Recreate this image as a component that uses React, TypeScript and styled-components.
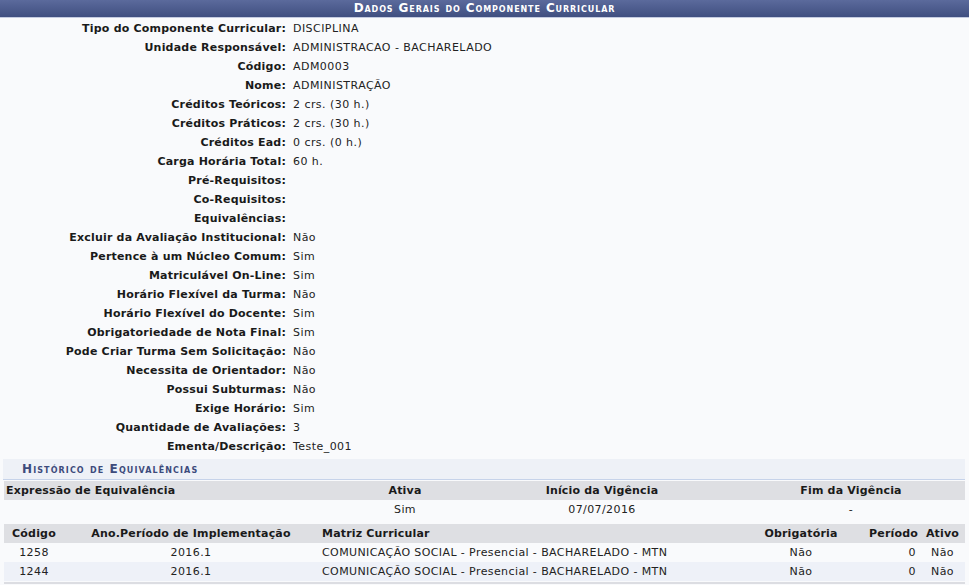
import React from "react";
import styled, { createGlobalStyle } from "styled-components";

const Global = createGlobalStyle`
  html, body { margin: 0; padding: 0; background: #ffffff; }
  body { font-family: "DejaVu Sans", Verdana, sans-serif; font-size: 11px; color: #222; }
`;

const Panel = styled.div`
  width: 969px;
  background: #f9fafc;
`;

const Caption = styled.div`
  height: 17px;
  line-height: 17px;
  background: linear-gradient(#5b6a9c, #404f80);
  color: #ffffff;
  font-weight: bold;
  font-variant: small-caps;
  font-size: 12px;
  text-align: center;
  letter-spacing: 0.9px;
  border-bottom: 1px solid #c4cbe0;
`;

const FormTable = styled.table`
  margin-top: 1px;
  width: 100%;
  border-collapse: collapse;
  table-layout: fixed;
`;

const Label = styled.th`
  width: 286px;
  height: 19px;
  padding: 0 4px 0 0;
  text-align: right;
  font-weight: bold;
  color: #1a1a1a;
  letter-spacing: 0.2px;
  white-space: nowrap;
`;

const Value = styled.td`
  padding: 0 0 0 3px;
  color: #222;
  letter-spacing: 0.45px;
  white-space: nowrap;
`;

const SubSection = styled.div`
  margin: 3px 4px 0 3px;
  height: 20px;
  line-height: 20px;
  padding-left: 19px;
  background: #eef1f7;
  border-bottom: 1px solid #c6d3ea;
  color: #3d4b7c;
  font-weight: bold;
  font-variant: small-caps;
  font-size: 12px;
  letter-spacing: 1.1px;
`;

const ListTable = styled.table<{ $gap?: number }>`
  margin: ${(p) => p.$gap ?? 0}px 4px 0 4px;
  width: 961px;
  border-collapse: collapse;
  table-layout: fixed;
`;

const Head = styled.th<{ $align?: string; $left?: number; $right?: number }>`
  background: #dedfe3;
  height: 19px;
  padding: 0 ${(p) => p.$right ?? 2}px 0 ${(p) => p.$left ?? 2}px;
  font-weight: bold;
  color: #1a1a1a;
  letter-spacing: 0.18px;
  text-align: ${(p) => p.$align ?? "left"};
  white-space: nowrap;
`;

const Row = styled.tr<{ $alt?: boolean }>`
  background: ${(p) => (p.$alt ? "#eef1f8" : "#f9fafc")};
`;

const Cell = styled.td<{ $align?: string; $right?: number }>`
  height: 19px;
  padding: 0 ${(p) => p.$right ?? 4}px 0 4px;
  text-align: ${(p) => p.$align ?? "left"};
  white-space: nowrap;
  letter-spacing: 0.4px;
  color: #222;
`;

const BottomLine = styled.div`
  margin: 1px 4px 0 4px;
  height: 2px;
  background: #dcdde2;
`;

const Tail = styled.div`
  height: 2px;
`;

const fields: [string, string][] = [
  ["Tipo do Componente Curricular:", "DISCIPLINA"],
  ["Unidade Responsável:", "ADMINISTRACAO - BACHARELADO"],
  ["Código:", "ADM0003"],
  ["Nome:", "ADMINISTRAÇÃO"],
  ["Créditos Teóricos:", "2 crs. (30 h.)"],
  ["Créditos Práticos:", "2 crs. (30 h.)"],
  ["Créditos Ead:", "0 crs. (0 h.)"],
  ["Carga Horária Total:", "60 h."],
  ["Pré-Requisitos:", ""],
  ["Co-Requisitos:", ""],
  ["Equivalências:", ""],
  ["Excluir da Avaliação Institucional:", "Não"],
  ["Pertence à um Núcleo Comum:", "Sim"],
  ["Matriculável On-Line:", "Sim"],
  ["Horário Flexível da Turma:", "Não"],
  ["Horário Flexível do Docente:", "Sim"],
  ["Obrigatoriedade de Nota Final:", "Sim"],
  ["Pode Criar Turma Sem Solicitação:", "Não"],
  ["Necessita de Orientador:", "Não"],
  ["Possui Subturmas:", "Não"],
  ["Exige Horário:", "Sim"],
  ["Quantidade de Avaliações:", "3"],
  ["Ementa/Descrição:", "Teste_001"],
];

const matrizes = [
  { codigo: "1258", ano: "2016.1", matriz: "COMUNICAÇÃO SOCIAL - Presencial - BACHARELADO - MTN", obrig: "Não", periodo: "0", ativo: "Não" },
  { codigo: "1244", ano: "2016.1", matriz: "COMUNICAÇÃO SOCIAL - Presencial - BACHARELADO - MTN", obrig: "Não", periodo: "0", ativo: "Não" },
];

export default function App() {
  return (
    <>
      <Global />
      <Panel>
        <Caption>Dados Gerais do Componente Curricular</Caption>
        <FormTable>
          <tbody>
            {fields.map(([l, v]) => (
              <tr key={l}>
                <Label>{l}</Label>
                <Value>{v}</Value>
              </tr>
            ))}
          </tbody>
        </FormTable>
        <SubSection>Histórico de Equivalências</SubSection>
        <ListTable $gap={1}>
          <colgroup>
            <col style={{ width: 351 }} />
            <col style={{ width: 100 }} />
            <col style={{ width: 294 }} />
            <col />
          </colgroup>
          <thead>
            <tr>
              <Head>Expressão de Equivalência</Head>
              <Head $align="center">Ativa</Head>
              <Head $align="center">Início da Vigência</Head>
              <Head $align="center" $right={14}>Fim da Vigência</Head>
            </tr>
          </thead>
          <tbody>
            <Row>
              <Cell></Cell>
              <Cell $align="center">Sim</Cell>
              <Cell $align="center">07/07/2016</Cell>
              <Cell $align="center" $right={16}>-</Cell>
            </Row>
          </tbody>
        </ListTable>
        <ListTable $gap={5}>
          <colgroup>
            <col style={{ width: 60 }} />
            <col style={{ width: 254 }} />
            <col style={{ width: 438 }} />
            <col style={{ width: 90 }} />
            <col style={{ width: 74 }} />
            <col />
          </colgroup>
          <thead>
            <tr>
              <Head $align="center">Código</Head>
              <Head $align="center">Ano.Período de Implementação</Head>
              <Head $left={4}>Matriz Curricular</Head>
              <Head $align="center">Obrigatória</Head>
              <Head $align="right">Período</Head>
              <Head $align="center">Ativo</Head>
            </tr>
          </thead>
          <tbody>
            {matrizes.map((m, i) => (
              <Row key={m.codigo} $alt={i % 2 === 1}>
                <Cell $align="center">{m.codigo}</Cell>
                <Cell $align="center">{m.ano}</Cell>
                <Cell>{m.matriz}</Cell>
                <Cell $align="center">{m.obrig}</Cell>
                <Cell $align="right">{m.periodo}</Cell>
                <Cell $align="center">{m.ativo}</Cell>
              </Row>
            ))}
          </tbody>
        </ListTable>
        <BottomLine />
        <Tail />
      </Panel>
    </>
  );
}
